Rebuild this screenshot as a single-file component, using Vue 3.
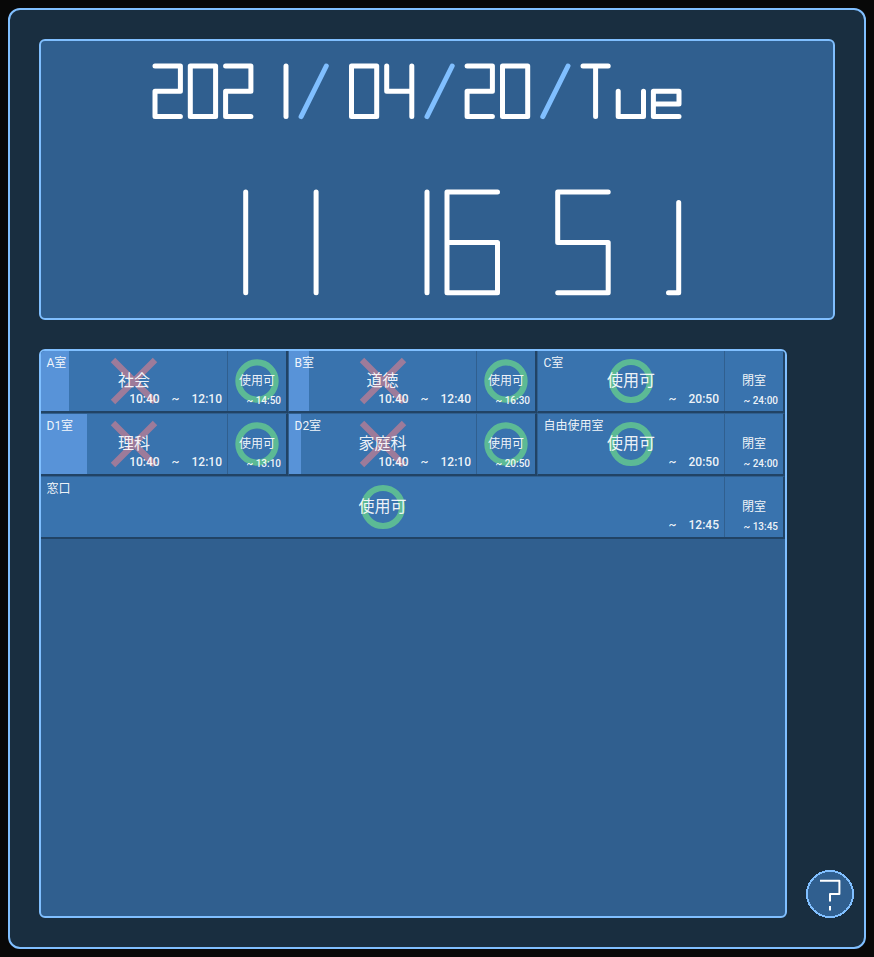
<script setup>
const dateStrokes = [
  'M155 66H180.4V91.3H155V116.6H180.4',
  'M190.3 66H215.6V116.6H190.3Z',
  'M225.6 66H250.9V91.3H225.6V116.6H250.9',
  'M286 66V116.6',
  'M351.5 66H376.7V116.6H351.5Z',
  'M386.7 66V91.3H411.8M411.8 66V116.6',
  'M467.1 66H492.4V91.3H467.1V116.6H492.4',
  'M502.5 66H527.7V116.6H502.5Z',
  'M583 66H608.2M595.6 66V116.6',
  'M618.2 91.3V116.6H643.5V91.3',
  'M679 116.6H653.4V91.3H679V103.9H653.4',
]
const slashStrokes = [
  'M301.1 116.6L326.3 66',
  'M427 116.6L452.2 66',
  'M542.8 116.6L568 66',
]
const timeStrokes = [
  'M245.7 192V292.8',
  'M316.1 192V292.8',
  'M427 192V292.8',
  'M497.5 192H447V292.8H497.5V242.4H447',
  'M608.2 192H557.7V242.4H608.2V292.8H557.7',
  'M678.7 202.6V292.8H668.5',
]
const S = '\u3000'
const rooms = [
  { name: 'A室', progress: 28, busy: true, label: '社会', time: `10:40${S}~${S}12:10`, next: '使用可', open: true, until: '14:50' },
  { name: 'B室', progress: 20, busy: true, label: '道徳', time: `10:40${S}~${S}12:40`, next: '使用可', open: true, until: '16:30' },
  { name: 'C室', progress: 0, busy: false, label: '使用可', time: `~${S}20:50`, next: '閉室', open: false, until: '24:00' },
  { name: 'D1室', progress: 46, busy: true, label: '理科', time: `10:40${S}~${S}12:10`, next: '使用可', open: true, until: '13:10' },
  { name: 'D2室', progress: 12, busy: true, label: '家庭科', time: `10:40${S}~${S}12:10`, next: '使用可', open: true, until: '20:50' },
  { name: '自由使用室', progress: 0, busy: false, label: '使用可', time: `~${S}20:50`, next: '閉室', open: false, until: '24:00' },
  { name: '窓口', progress: 0, busy: false, label: '使用可', time: `~${S}12:45`, next: '閉室', open: false, until: '13:45', wide: true },
]
</script>

<template>
  <div class="screen">
    <main class="frame">
      <section class="clock">
        <svg class="digits" viewBox="41 41 792 277" width="792" height="277" role="img" aria-label="2021/04/20/Tue 11 16 51">
          <g class="stroke">
            <path v-for="d in dateStrokes" :key="d" :d="d" />
            <path v-for="d in timeStrokes" :key="d" :d="d" />
          </g>
          <g class="stroke slash">
            <path v-for="d in slashStrokes" :key="d" :d="d" />
          </g>
        </svg>
      </section>
      <div class="lower">
        <section class="board">
          <div class="rooms">
            <article v-for="r in rooms" :key="r.name" class="room" :class="{ wide: r.wide }">
              <div class="current">
                <div v-if="r.progress" class="progress" :style="{ width: r.progress + 'px' }"></div>
                <svg class="mark" width="60" height="60" viewBox="-30 -30 60 60">
                  <path v-if="r.busy" class="cross" d="M-21 -21L21 21M-21 21L21 -21" />
                  <circle v-else class="ring" r="19" />
                </svg>
                <span class="name">{{ r.name }}</span>
                <span class="label">{{ r.label }}</span>
                <span class="time">{{ r.time }}</span>
              </div>
              <div class="next">
                <svg v-if="r.open" class="mark" width="58" height="60" viewBox="-29 -30 58 60">
                  <circle class="ring" r="18.6" />
                </svg>
                <span class="label">{{ r.next }}</span>
                <span class="time">~ {{ r.until }}</span>
              </div>
            </article>
          </div>
        </section>
        <button class="help" aria-label="?">
          <svg width="48" height="48" viewBox="0 0 48 48">
            <circle class="disc" cx="24" cy="24" r="23" />
            <path class="query" d="M14 10.7H33.4V24H24V31.5M24 36V40.5" />
          </svg>
        </button>
      </div>
    </main>
  </div>
</template>

<style>
body {
  margin: 0;
  background: #080808;
}
</style>

<style scoped>
.screen {
  box-sizing: border-box;
  width: 874px;
  height: 957px;
  padding: 8px;
  background: #080808;
  font-family: Roboto, "Noto Sans CJK JP", sans-serif;
}
.frame {
  box-sizing: border-box;
  display: flex;
  flex-direction: column;
  gap: 29px;
  width: 858px;
  height: 941px;
  padding: 29px 10px 29px 29px;
  border: 2px solid #80bfff;
  border-radius: 12px;
  background: #192e40;
}
.clock {
  box-sizing: border-box;
  width: 796px;
  height: 281px;
  border: 2px solid #80bfff;
  border-radius: 6px;
  background: #305f8f;
}
.digits {
  display: block;
}
.stroke {
  fill: none;
  stroke: #fff;
  stroke-width: 5;
  stroke-linecap: round;
  stroke-linejoin: round;
}
.slash {
  stroke: #80bfff;
}
.lower {
  display: flex;
  align-items: flex-end;
  gap: 19px;
  height: 569px;
}
.board {
  box-sizing: border-box;
  width: 748px;
  height: 569px;
  border: 2px solid #80bfff;
  border-radius: 6px;
  background: #305f8f;
  overflow: hidden;
}
.rooms {
  display: grid;
  grid-template-columns: 248px 249px 248px;
  grid-auto-rows: 63px;
  margin: -1px 0 0 -1px;
}
.room {
  box-sizing: border-box;
  display: flex;
  border-style: solid;
  border-width: 1px 2px 2px 1px;
  border-color: #305f8f #214365 #214365 #305f8f;
  background: #3973ae;
  color: rgba(255, 255, 255, 0.93);
}
.wide {
  grid-column: 1 / -1;
}
.current,
.next {
  display: grid;
  grid-template-columns: 100%;
  height: 60px;
}
.current {
  flex: 1;
}
.next {
  box-sizing: border-box;
  width: 59px;
  border-left: 1px solid #305f8f;
}
.current > *,
.next > * {
  grid-area: 1 / 1;
}
.progress {
  height: 60px;
  background: #5893d8;
}
.mark {
  display: block;
  justify-self: center;
}
.cross {
  fill: none;
  stroke: #9d7b9a;
  stroke-width: 6.3;
}
.ring {
  fill: none;
  stroke: #5cba95;
  stroke-width: 6.2;
}
.name,
.label,
.time {
  white-space: pre;
  z-index: 1;
}
.name {
  padding: 3px 0 0 5.5px;
  font-size: 12px;
  line-height: 18px;
}
.label {
  justify-self: center;
  padding-top: 18px;
  font-size: 16px;
  line-height: 24px;
}
.time {
  align-self: end;
  justify-self: end;
  padding: 0 5px 3px 0;
  font-size: 12px;
  font-weight: 500;
  line-height: 18px;
}
.next .label {
  font-size: 12px;
}
.next .time {
  padding-bottom: 1px;
  font-size: 10px;
}
.help {
  padding: 0;
  border: 0;
  background: none;
}
.help svg {
  display: block;
}
.disc {
  fill: #305f8f;
  stroke: #80bfff;
  stroke-width: 2;
  shape-rendering: crispEdges;
}
.query {
  fill: none;
  stroke: #fff;
  stroke-width: 2;
  stroke-linecap: butt;
  stroke-linejoin: round;
}
</style>
